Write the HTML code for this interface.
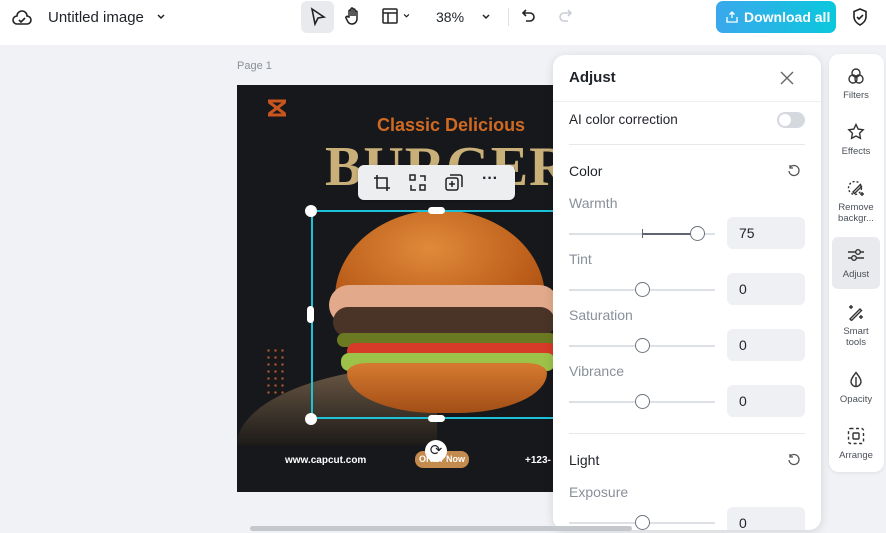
<!DOCTYPE html>
<html><head><style>
*{box-sizing:border-box;margin:0;padding:0}
body{width:886px;height:533px;overflow:hidden;background:#f0f2f5;font-family:"Liberation Sans",sans-serif;position:relative;color:#1f2329}
.top{position:absolute;left:0;top:0;width:886px;height:45px;background:#fff}
.abs{position:absolute}
.lbl{font-size:14px;color:#8a9099}
.sl{position:absolute;left:16px;width:146px;height:2px;background:#dde0e4}
.knob{position:absolute;width:15px;height:15px;border-radius:50%;background:#fff;border:1.5px solid #6b7480}
.inp{position:absolute;left:174px;width:78px;height:32px;background:#eef0f3;border-radius:6px;font-size:14px;padding:8px 12px}
.it{position:absolute;left:3px;width:48px;text-align:center;font-size:9.5px;color:#4a5059;line-height:11px}
.it svg{display:block;margin:0 auto 5px}
</style></head><body>
<div class="top">
 <svg class="abs" style="left:12px;top:8px" width="20" height="20" viewBox="0 0 20 20" fill="none" stroke="#222" stroke-width="1.6"><path d="M5 16a4 4 0 0 1 0-8 5 5 0 0 1 10 0 4 4 0 0 1 0 8z"/><path d="M7 12l2 2 4-4"/></svg>
 <div class="abs" style="left:48px;top:9px;font-size:15px;font-weight:500">Untitled image</div>
 <svg class="abs" style="left:156px;top:12px" width="10" height="10" viewBox="0 0 10 10" fill="none" stroke="#222" stroke-width="1.5"><path d="M2 3l3 3 3-3"/></svg>
 <div class="abs" style="left:301px;top:1px;width:33px;height:32px;background:#e8eaed;border-radius:6px"></div>
 <svg class="abs" style="left:309px;top:7px" width="18" height="20" viewBox="0 0 18 20" fill="none" stroke="#222" stroke-width="1.6"><path d="M3 2l12 8-6 1-3 6z"/></svg>
 <svg class="abs" style="left:343px;top:6px" width="20" height="20" viewBox="0 0 20 20" fill="none" stroke="#222" stroke-width="1.5"><path d="M6 11V5a1 1 0 0 1 2 0v5V3a1 1 0 0 1 2 0v7V4a1 1 0 0 1 2 0v6V6a1 1 0 0 1 2 0v7a5 5 0 0 1-5 5 5 5 0 0 1-4-2l-2-4a1 1 0 0 1 2-1z"/></svg>
 <svg class="abs" style="left:382px;top:8px" width="16" height="16" viewBox="0 0 16 16" fill="none" stroke="#222" stroke-width="1.5"><rect x="1" y="1" width="14" height="14" rx="1"/><path d="M1 5h14M6 5v10"/></svg>
 <svg class="abs" style="left:402px;top:12px" width="9" height="8" viewBox="0 0 10 10" fill="none" stroke="#222" stroke-width="1.5"><path d="M2 3l3 3 3-3"/></svg>
 <div class="abs" style="left:436px;top:9px;font-size:14px;font-weight:500">38%</div>
 <svg class="abs" style="left:481px;top:12px" width="10" height="10" viewBox="0 0 10 10" fill="none" stroke="#222" stroke-width="1.5"><path d="M2 3l3 3 3-3"/></svg>
 <div class="abs" style="left:508px;top:8px;width:1px;height:18px;background:#dde0e4"></div>
 <svg class="abs" style="left:521px;top:8px" width="16" height="18" viewBox="0 0 16 18" fill="none" stroke="#222" stroke-width="1.6"><path d="M5 2L2 5l3 3M2 5h7a4 4 0 0 1 0 8H5"/></svg>
 <svg class="abs" style="left:557px;top:8px" width="16" height="18" viewBox="0 0 16 18" fill="none" stroke="#c9ced6" stroke-width="1.6"><path d="M11 2l3 3-3 3M14 5H7a4 4 0 0 0 0 8h4"/></svg>
 <div class="abs" style="left:716px;top:1px;width:120px;height:32px;border-radius:7px;background:linear-gradient(90deg,#3aa8ec,#0bc8dc);color:#fff;font-size:14px;font-weight:bold;padding:8px 0 0 28px">Download all</div>
 <svg class="abs" style="left:726px;top:10px" width="12" height="13" viewBox="0 0 12 13" fill="none" stroke="#fff" stroke-width="1.3"><path d="M6 8V2M3.5 4.5L6 2l2.5 2.5M1 7v5h10V7"/></svg>
 <svg class="abs" style="left:851px;top:7px" width="18" height="20" viewBox="0 0 18 20" fill="none" stroke="#222" stroke-width="1.6"><path d="M9 2l6 2.5v5c0 4-3 7-6 8.5-3-1.5-6-4.5-6-8.5v-5z"/><path d="M6 10l2 2 4-4"/></svg>
</div>
<div class="abs" style="left:237px;top:60px;font-size:11px;color:#8a9099">Page 1</div>
<!-- canvas -->
<div class="abs" style="left:237px;top:85px;width:320px;height:407px;background:#17181c;overflow:hidden">
 <svg class="abs" style="left:29px;top:14px" width="22" height="18" viewBox="0 0 22 18" fill="none" stroke="#c8561e" stroke-width="3"><path d="M2 2h18M2 16h18M3 3l16 12M19 3L3 15"/></svg>
 <div class="abs" style="left:140px;top:30px;color:#d06a22;font-size:18px;font-weight:bold;font-family:'Liberation Sans Narrow','Liberation Sans',sans-serif">Classic Delicious</div>
 <div class="abs" style="left:88px;top:50px;color:#c9b079;font-size:56px;font-weight:bold;font-family:'Liberation Serif',serif;letter-spacing:1px">BURGER</div>
 <div class="abs" style="left:0;top:280px;width:200px;height:80px;border-radius:100% 0 0 0/100% 0 0 0;background:linear-gradient(#6d5a46,#1e1b19)"></div>
 <div class="abs" style="left:28px;top:262px;width:22px;height:50px;background:radial-gradient(circle,#a0522d 1px,transparent 1.5px) 0 0/7px 7px"></div>
 <!-- burger -->
 <div class="abs" style="left:98px;top:125px;width:210px;height:110px;border-radius:50% 50% 18% 18%/80% 80% 20% 20%;background:radial-gradient(ellipse at 45% 35%,#e08a3a,#b85a18 70%,#8a4010)"></div>
 <div class="abs" style="left:92px;top:200px;width:230px;height:40px;border-radius:20px;background:#e2a98a"></div>
 <div class="abs" style="left:96px;top:222px;width:222px;height:30px;border-radius:15px;background:#4a3428"></div>
 <div class="abs" style="left:100px;top:248px;width:220px;height:14px;border-radius:8px;background:#6b7a22"></div>
 <div class="abs" style="left:110px;top:258px;width:210px;height:16px;border-radius:8px;background:#d63a28"></div>
 <div class="abs" style="left:104px;top:268px;width:214px;height:18px;border-radius:8px;background:#9cc24a"></div>
 <div class="abs" style="left:110px;top:278px;width:200px;height:50px;border-radius:10% 10% 45% 45%/20% 20% 80% 80%;background:linear-gradient(#d57a30,#a24e16)"></div>
 <div class="abs" style="left:48px;top:370px;color:#fff;font-size:10px;font-weight:bold">www.capcut.com</div>
 <div class="abs" style="left:178px;top:366px;width:54px;height:17px;border-radius:8px;background:#c58a4e;color:#fff;font-size:9px;text-align:center;padding-top:3px;font-weight:bold">Order Now</div>
 <div class="abs" style="left:288px;top:370px;color:#fff;font-size:10px;font-weight:bold">+123-</div>
</div>
<!-- selection -->
<div class="abs" style="left:311px;top:210px;width:260px;height:209px;border:2px solid #1ec2d8;border-right:none"></div>
<div class="abs" style="left:305px;top:205px;width:12px;height:12px;border-radius:50%;background:#fff"></div>
<div class="abs" style="left:305px;top:413px;width:12px;height:12px;border-radius:50%;background:#fff"></div>
<div class="abs" style="left:428px;top:207px;width:17px;height:7px;border-radius:4px;background:#fff"></div>
<div class="abs" style="left:428px;top:415px;width:17px;height:7px;border-radius:4px;background:#fff"></div>
<div class="abs" style="left:307px;top:306px;width:7px;height:17px;border-radius:4px;background:#fff"></div>
<div class="abs" style="left:425px;top:440px;width:22px;height:22px;border-radius:50%;background:#fff;font-size:15px;text-align:center;line-height:22px">⟳</div>
<div class="abs" style="left:358px;top:165px;width:157px;height:35px;border-radius:6px;background:#eceeef;box-shadow:0 1px 3px rgba(0,0,0,.2)">
 <svg class="abs" style="left:15px;top:9px" width="18" height="18" viewBox="0 0 18 18" fill="none" stroke="#222" stroke-width="1.6"><path d="M4 1v13h13M1 4h13v13"/></svg>
 <svg class="abs" style="left:51px;top:9px" width="18" height="18" viewBox="0 0 18 18" fill="none" stroke="#222" stroke-width="1.5"><rect x="1" y="1" width="5" height="5"/><rect x="11" y="11" width="5" height="5"/><path d="M11 2h5v5M2 11v5h5"/></svg>
 <svg class="abs" style="left:87px;top:9px" width="18" height="18" viewBox="0 0 18 18" fill="none" stroke="#222" stroke-width="1.5"><rect x="1" y="4" width="12" height="12" rx="2"/><path d="M5 1h10a2 2 0 0 1 2 2v10M7 7v6M4 10h6"/></svg>
 <div class="abs" style="left:124px;top:5px;font-size:16px;font-weight:bold">···</div>
</div>
<!-- panel -->
<div class="abs" style="left:553px;top:55px;width:268px;height:475px;background:#fff;border-radius:12px;box-shadow:0 2px 10px rgba(0,0,0,.12);overflow:hidden">
 <div class="abs" style="left:16px;top:14px;font-size:15px;font-weight:bold">Adjust</div>
 <svg class="abs" style="left:227px;top:16px" width="14" height="14" viewBox="0 0 14 14" stroke="#666" stroke-width="1.4"><path d="M1 1l12 12M13 1L1 13"/></svg>
 <div class="abs" style="left:0;top:46px;width:268px;height:1px;background:#eceef0"></div>
 <div class="abs" style="left:16px;top:57px;font-size:13.5px;font-weight:500">AI color correction</div>
 <div class="abs" style="left:224px;top:57px;width:28px;height:16px;border-radius:8px;background:#d5d9de"><div class="abs" style="left:2px;top:2px;width:12px;height:12px;border-radius:50%;background:#fff"></div></div>
 <div class="abs" style="left:16px;top:89px;width:236px;height:1px;background:#e6e8eb"></div>
 <div class="abs" style="left:16px;top:108px;font-size:14px;font-weight:500">Color</div>
 <svg class="abs" style="left:234px;top:109px" width="14" height="14" viewBox="0 0 14 14" fill="none" stroke="#555" stroke-width="1.3"><path d="M3 3.5A5 5 0 1 1 2 7M3 1v3h3"/></svg>
 <div class="abs lbl" style="left:16px;top:140px">Warmth</div>
 <div class="sl" style="top:178px"></div><div class="abs" style="left:89px;top:178px;width:55px;height:2px;background:#5c6570"></div><div class="abs" style="left:89px;top:174px;width:1px;height:9px;background:#5c6570"></div><div class="knob" style="left:137px;top:171px"></div>
 <div class="inp" style="top:162px">75</div>
 <div class="abs lbl" style="left:16px;top:196px">Tint</div>
 <div class="sl" style="top:234px"></div><div class="knob" style="left:82px;top:227px"></div><div class="inp" style="top:218px">0</div>
 <div class="abs lbl" style="left:16px;top:252px">Saturation</div>
 <div class="sl" style="top:290px"></div><div class="knob" style="left:82px;top:283px"></div><div class="inp" style="top:274px">0</div>
 <div class="abs lbl" style="left:16px;top:308px">Vibrance</div>
 <div class="sl" style="top:346px"></div><div class="knob" style="left:82px;top:339px"></div><div class="inp" style="top:330px">0</div>
 <div class="abs" style="left:16px;top:378px;width:236px;height:1px;background:#e6e8eb"></div>
 <div class="abs" style="left:16px;top:397px;font-size:14px;font-weight:500">Light</div>
 <svg class="abs" style="left:234px;top:398px" width="14" height="14" viewBox="0 0 14 14" fill="none" stroke="#555" stroke-width="1.3"><path d="M3 3.5A5 5 0 1 1 2 7M3 1v3h3"/></svg>
 <div class="abs lbl" style="left:16px;top:429px">Exposure</div>
 <div class="sl" style="top:467px"></div><div class="knob" style="left:82px;top:460px"></div><div class="inp" style="top:452px">0</div>
</div>
<!-- side -->
<div class="abs" style="left:829px;top:54px;width:55px;height:418px;background:#fff;border-radius:10px;box-shadow:0 1px 4px rgba(0,0,0,.08)">
 <div class="abs" style="left:3px;top:183px;width:48px;height:52px;background:#e8eaed;border-radius:6px"></div>
 <div class="it" style="top:13px"><svg width="18" height="18" viewBox="0 0 18 18" fill="none" stroke="#333" stroke-width="1.4"><circle cx="9" cy="6" r="4"/><circle cx="6" cy="12" r="4"/><circle cx="12" cy="12" r="4"/></svg>Filters</div>
 <div class="it" style="top:69px"><svg width="18" height="18" viewBox="0 0 18 18" fill="none" stroke="#333" stroke-width="1.4"><path d="M9 1.5l2.2 4.6 5 .7-3.6 3.5.8 5L9 13l-4.4 2.3.8-5L1.8 6.8l5-.7z"/></svg>Effects</div>
 <div class="it" style="top:125px"><svg width="18" height="18" viewBox="0 0 18 18" fill="none" stroke="#333" stroke-width="1.4"><circle cx="8" cy="9" r="6.5" stroke-dasharray="2 2"/><path d="M6 13l7-7 1.5 1.5-7 7z"/><path d="M15 13v4M13 15h4"/></svg>Remove<br>backgr...</div>
 <div class="it" style="top:192px"><svg width="18" height="18" viewBox="0 0 18 18" fill="none" stroke="#333" stroke-width="1.4"><path d="M1 6h16M1 12h16"/><circle cx="11" cy="6" r="2.3" fill="#e8eaed"/><circle cx="7" cy="12" r="2.3" fill="#e8eaed"/></svg>Adjust</div>
 <div class="it" style="top:249px"><svg width="18" height="18" viewBox="0 0 18 18" fill="none" stroke="#333" stroke-width="1.4"><path d="M3 16L13 6l1.5 1.5-10 10zM4 2v4M2 4h4M14 12v4M12 14h4"/></svg>Smart<br>tools</div>
 <div class="it" style="top:317px"><svg width="18" height="18" viewBox="0 0 18 18" fill="none" stroke="#333" stroke-width="1.4"><path d="M9 1.5c3 4 5 6.5 5 9a5 5 0 0 1-10 0c0-2.5 2-5 5-9z"/><path d="M9 6v9"/></svg>Opacity</div>
 <div class="it" style="top:373px"><svg width="18" height="18" viewBox="0 0 18 18" fill="none" stroke="#333" stroke-width="1.4"><rect x="1.5" y="1.5" width="15" height="15" rx="2" stroke-dasharray="3 2.5"/><rect x="6" y="6" width="6" height="6" rx="1"/></svg>Arrange</div>
</div>
<div class="abs" style="left:250px;top:526px;width:382px;height:5px;border-radius:3px;background:#c4c7cc"></div>
</body></html>
